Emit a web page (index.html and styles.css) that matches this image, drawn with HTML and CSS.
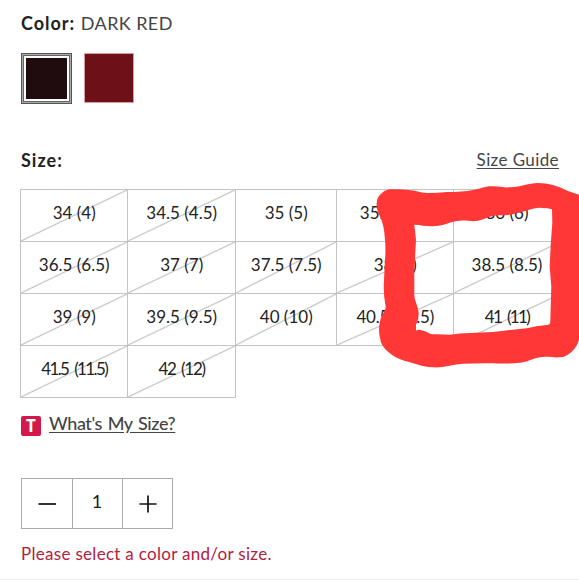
FILE: index.html
```html
<!DOCTYPE html>
<html lang="en">
<head>
    <meta charset="UTF-8">
    <meta name="viewport" content="width=device-width, initial-scale=1.0">
    <title>Product Options</title>
    <link rel="stylesheet" href="styles.css">
</head>
<body>
    <div class="product-options">
        <div class="color-label"><b>Color:</b> <span>DARK RED</span></div>
        <div class="swatches">
            <div class="swatch selected"></div>
            <div class="swatch red"></div>
        </div>

        <div class="size-header">
            <b>Size:</b>
            <a class="size-guide">Size Guide</a>
        </div>
        <div class="size-grid">
            <div class="size sold-out">34 (4)</div>
            <div class="size sold-out">34.5 (4.5)</div>
            <div class="size">35 (5)</div>
            <div class="size">35.5 (5.5)</div>
            <div class="size">36 (6)</div>
            <div class="size sold-out">36.5 (6.5)</div>
            <div class="size sold-out">37 (7)</div>
            <div class="size sold-out">37.5 (7.5)</div>
            <div class="size sold-out">38 (8)</div>
            <div class="size sold-out">38.5 (8.5)</div>
            <div class="size sold-out">39 (9)</div>
            <div class="size sold-out">39.5 (9.5)</div>
            <div class="size sold-out">40 (10)</div>
            <div class="size sold-out close">40.5 (10.5)</div>
            <div class="size sold-out tight">41 (11)</div>
            <div class="size sold-out tight">41.5 (11.5)</div>
            <div class="size sold-out snug">42 (12)</div>
        </div>

        <div class="my-size">
            <span class="badge">T</span>
            <a>What's My Size?</a>
        </div>

        <div class="quantity">
            <div class="qty-cell">
                <svg width="18" height="18" viewBox="0 0 18 18"><path d="M0.5 9H18" stroke="#111" stroke-width="1.7"/></svg>
            </div>
            <div class="qty-cell value">1</div>
            <div class="qty-cell">
                <svg width="18" height="18" viewBox="0 0 18 18"><path d="M0.5 9H17.5M9 0.5V17.5" stroke="#111" stroke-width="1.7"/></svg>
            </div>
        </div>
        <p class="error">Please select a color and/or size.</p>
    </div>

    <!-- hand drawn marker around the last sizes -->
    <svg class="marker" width="579" height="580" viewBox="0 0 579 580">
        <path fill="#ff3737" fill-rule="evenodd" d="M376.7 203C377 198 379 195 382 193Q386 189 392 189.3Q402 189 408 190C416 190 420 193 427 193Q438 193 447 192Q462 192 473 190C480 189 485 186 492 186.3C499 186 504 188 510 187.3C522 187 528 183 538 183Q546 183 552 184.7Q561 187 568 191L579 194.7V340Q577 347 571.7 351.7Q566 357 560 357.3C553 358 549 356 543 357C535 357 529 362 520 362.7Q506 364 493 363.3Q478 363 463 363.7C453 364 443 368 433 367.3C422 367 414 363 405 361Q395 358 388 351.7Q381 346 380 338Q378 329 380 321.7C381 315 386 311 385.7 306.7Q383 294 384 280L385 260Q386 247 384.7 236.7Q384 226 380.7 218Q376 210 376.7 203Z
        M414.3 224.7C422 225 428 227 435 226C444 226 451 221 460 220.7C467 220 472 222 478 220.7C486 219 491 215 500 215.3C506 215 511 215 516.7 213.3C525 212 534 207 541.7 208Q548 208 552 209.3L552.3 223L550.7 245L549.7 266.7L551.3 286.7L550.3 321.7Q550 325 547 325Q536 326 526.7 328.3Q510 330 493 332L470 333Q460 333 450 334.7Q440 334 431.7 334.3C428 333 426 331 423 330.7Q418 329 416 330.7L416 325Q419 319 418.7 313.3C418 305 414 301 414.3 293.3V270L416 240Z"/>
    </svg>
</body>
</html>
```

FILE: styles.css
```css
* {
    box-sizing: border-box;
}
body {
    margin: 0;
    position: relative;
    height: 580px;
    overflow: hidden;
    font-family: Lato, sans-serif;
    font-size: 18px;
    color: #222;
    background-color: #fff;
}
.product-options {
    height: 580px;
    padding: 11px 19px 0 20px;
    border-bottom: 1px solid #eee;
}
.color-label {
    height: 24px;
    line-height: 24px;
    padding-left: 1px;
    letter-spacing: 1px;
}
.color-label span {
    color: #444;
    letter-spacing: 0.4px;
}
.swatches {
    display: flex;
    gap: 12px;
    margin-top: 18px;
    padding-left: 1px;
}
.swatch {
    width: 50px;
    height: 50px;
    border: 1px solid #dc9da2;
}
.swatch.selected {
    width: 51px;
    height: 51px;
    padding: 4px;
    border: 1px solid #555;
    outline: 1px solid #666;
    outline-offset: -3px;
    box-shadow: inset 0 0 0 1px #aaa;
    background-color: #200b0e;
    background-clip: content-box;
}
.swatch.red {
    background-color: #6e1018;
}
.size-header {
    display: flex;
    justify-content: space-between;
    margin-top: 44px;
    height: 41px;
    line-height: 24px;
    padding: 0 1px;
    letter-spacing: 1px;
}
.size-guide {
    font-size: 17px;
    letter-spacing: 0.4px;
    color: #444;
    text-decoration: underline;
    text-underline-offset: 2px;
}
.size-grid {
    display: grid;
    grid-template-columns: 107.4px 107.6px 101.5px 116.5px 107px;
    grid-auto-rows: 52px;
}
.size {
    margin: 0 -1px -1px 0;
    border: 1px solid #c4c4c4;
    line-height: 46px;
    text-align: center;
    font-size: 17px;
}
.sold-out {
    background: linear-gradient(to bottom right, transparent calc(50% - 1.2px), #c4c4c4 50%, transparent calc(50% + 1.2px));
}
.tight {
    letter-spacing: -1.6px;
    word-spacing: 3px;
}
.snug {
    letter-spacing: -1.2px;
    word-spacing: 2px;
}
.close {
    letter-spacing: -0.3px;
}
.my-size {
    display: flex;
    align-items: center;
    gap: 8px;
    margin-top: 15px;
    padding-left: 1px;
    height: 24px;
    color: #444;
    font-weight: 500;
}
.my-size a {
    line-height: 22px;
    letter-spacing: -0.4px;
    word-spacing: 1.5px;
    text-decoration: underline;
    text-underline-offset: 2px;
    margin-top: -2px;
}
.badge {
    width: 20px;
    height: 20px;
    margin-top: 3px;
    border-radius: 2px;
    background-color: #d3194b;
    color: #fff;
    font: bold 17px/20px "Open Sans", sans-serif;
    text-align: center;
}
.quantity {
    display: flex;
    width: 152px;
    height: 51px;
    margin: 42px 0 0 1px;
    border: 1px solid #aaa;
}
.qty-cell {
    flex: 1;
    display: flex;
    align-items: center;
    justify-content: center;
    padding-left: 1px;
}
.qty-cell.value {
    flex: 0 0 51px;
    border: solid #aaa;
    border-width: 0 1px;
    padding: 0 0 5px;
}
.error {
    margin: 13px 0 0 1px;
    line-height: 24px;
    font-size: 17px;
    letter-spacing: 0.3px;
    color: #b3203e;
}
.marker {
    position: absolute;
    top: 0;
    left: 0;
}
```
